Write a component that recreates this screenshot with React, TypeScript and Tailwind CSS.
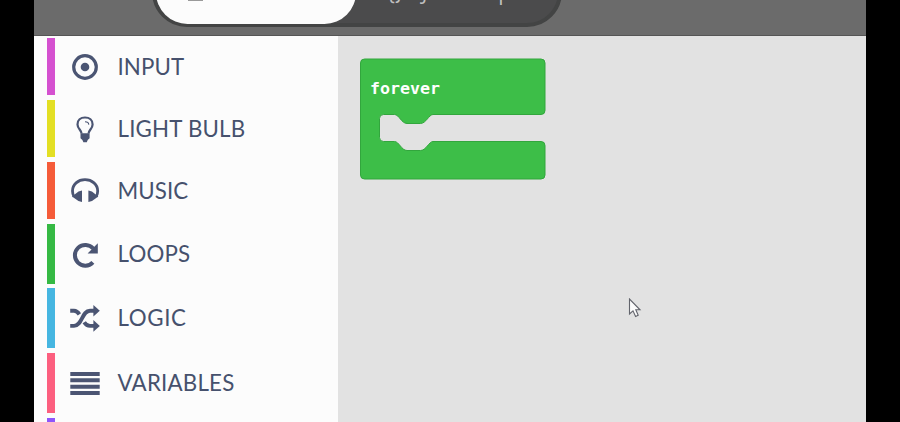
import React from "react";

type Category = {
  label: string;
  bar: string;
  row: string;
  text: string;
  icon: React.ReactNode;
};

const ink = "#4b5573";

const TargetIcon = () => (
  <svg width="32" height="32" viewBox="0 0 32 32" fill="none">
    <circle cx="16" cy="16" r="11.3" stroke={ink} strokeWidth="3.2" />
    <circle cx="16" cy="16" r="4.3" fill={ink} />
  </svg>
);

const BulbIcon = () => (
  <svg width="32" height="32" viewBox="0 0 32 32" fill="none">
    <path
      d="M12.6 20.5C12.4 17 8.5 15.6 8.5 11.4C8.5 7.2 11.6 4.5 16 4.5C20.4 4.5 23.6 7.2 23.6 11.4C23.6 15.6 19.7 17 19.5 20.5"
      stroke={ink}
      strokeWidth="2.2"
    />
    <path d="M16 8.8C18.2 8.8 19.6 9.8 19.8 11.6" stroke={ink} strokeWidth="1.1" />
    <path d="M11.5 20.2H20.6V25.3L18.7 27L17.8 29.3H14.4L13.4 27L11.5 25.3Z" fill={ink} />
  </svg>
);

const HeadphonesIcon = () => (
  <svg width="32" height="32" viewBox="0 0 32 32" fill="none">
    <path
      d="M5 21.5C3.9 19.7 3.5 17.8 3.5 16C3.5 9.3 9 4.7 16 4.7C23 4.7 28.7 9.3 28.7 16C28.7 17.8 28.3 19.7 27.2 21.5"
      stroke={ink}
      strokeWidth="2.8"
    />
    <path d="M13 15.6V27L9.4 26L3 21.4L9.5 16.6Z" fill={ink} />
    <path d="M19.4 15.6V27L23 26L29.3 21.4L22.9 16.6Z" fill={ink} />
  </svg>
);

const RedoIcon = () => (
  <svg width="32" height="32" viewBox="0 0 32 32" fill="none">
    <path d="M24.2 10.5A10.4 10.4 0 1 0 23.9 24.4" stroke={ink} strokeWidth="4" />
    <path d="M28.8 5.2V15.4H18.6Z" fill={ink} />
  </svg>
);

const ShuffleIcon = () => (
  <svg width="32" height="32" viewBox="0 0 32 32" fill="none">
    <path d="M1.2 8.8H5C7.8 8.8 9 10.2 10.4 12.4" stroke={ink} strokeWidth="3.9" />
    <path
      d="M1.2 23.9H5C13.2 23.9 12.8 8.8 21 8.8H25"
      stroke={ink}
      strokeWidth="3.9"
    />
    <path d="M15.2 20.3C16.6 22.5 18.2 23.9 21 23.9H25" stroke={ink} strokeWidth="3.9" />
    <path d="M24.4 3L30.8 8.8L24.4 14.6Z" fill={ink} />
    <path d="M24.4 18.1L30.8 23.9L24.4 29.7Z" fill={ink} />
  </svg>
);

const LinesIcon = () => (
  <svg width="32" height="32" viewBox="0 0 32 32" fill={ink}>
    <path d="M1.3 5H30.7V9H1.3ZM1.3 11.3H30.7V15.2H1.3ZM1.3 17.8H30.7V21.7H1.3ZM1.3 24H30.7V28H1.3Z" />
  </svg>
);

const categories: Category[] = [
  { label: "INPUT", bar: "bg-[#d551d0]", row: "h-[57px] mb-[5px]", text: "tracking-[0.1px]", icon: <TargetIcon /> },
  { label: "LIGHT BULB", bar: "bg-[#e3df24]", row: "h-[57px] mb-[5px]", text: "tracking-[0.2px]", icon: <BulbIcon /> },
  { label: "MUSIC", bar: "bg-[#f55b39]", row: "h-[57px] mb-[5px]", text: "tracking-[0.1px]", icon: <HeadphonesIcon /> },
  { label: "LOOPS", bar: "bg-[#35b944]", row: "h-[60px] mb-[4px]", text: "tracking-[0.2px]", icon: <RedoIcon /> },
  { label: "LOGIC", bar: "bg-[#46b6e1]", row: "h-[60px] mb-[5px]", text: "tracking-[0.6px]", icon: <ShuffleIcon /> },
  { label: "VARIABLES", bar: "bg-[#fc5f7f]", row: "h-[60px] mb-[5px]", text: "tracking-[0.2px]", icon: <LinesIcon /> },
];

const Header = () => (
  <header className="h-9 shrink-0 overflow-hidden border-b border-[#555555] bg-[#6b6b6b] pl-[118px]">
    <div className="-mt-[43px] flex h-[70px] w-[410px] rounded-full border-4 border-[#434444] bg-[#4b4b4c]">
      <div className="flex h-[63px] w-[200px] shrink-0 items-end rounded-full bg-[#fcfcfc] pb-[23px] pl-8">
        <div className="h-[2px] w-[15px] bg-[#9a9a9a]" />
      </div>
      <div className="whitespace-pre pl-[31px] pt-[17px] font-['Open_Sans',sans-serif] text-[21px] font-medium leading-[28px] text-[#c0c0c0]">
        {"{}"}
        <span className="pl-[19px] tracking-[0.2px]">JavaScript</span>
      </div>
    </div>
  </header>
);

const Toolbox = () => (
  <nav className="flex w-[304px] shrink-0 flex-col bg-[#fcfcfc] pl-[13px] pt-[2px]">
    {categories.map((c) => (
      <div key={c.label} className={`flex shrink-0 items-center ${c.row}`}>
        <div className={`w-2 shrink-0 self-stretch ${c.bar}`} />
        <div className="ml-[13.5px] shrink-0">{c.icon}</div>
        <span
          className={`ml-[17px] whitespace-nowrap font-['Lato',sans-serif] text-[22.3px] leading-7 text-[#46516d] ${c.text}`}
        >
          {c.label}
        </span>
      </div>
    ))}
    <div className="h-4 w-2 shrink-0 bg-[#8f55fb]" />
  </nav>
);

const Workspace = () => (
  <main className="min-w-0 flex-1 bg-[#e2e2e2] pl-[22px] pt-[22px]">
    <div className="grid h-[122px] w-[186px]">
      <svg className="col-start-1 row-start-1" width="186" height="122" viewBox="0 0 186 122">
        <path
          d="M4.5 1H181A4 4 0 0 1 185 5V52.5A4 4 0 0 1 181 56.5H73C69 56.5 66 65.5 60.5 65.5H47C41.5 65.5 39 56.5 34.5 56.5H23.5A4 4 0 0 0 19.5 60.5V79.5A4 4 0 0 0 23.5 83.5H34.5C39 83.5 41.5 92.5 47 92.5H60.5C66 92.5 69 83.5 73 83.5H181A4 4 0 0 1 185 87.5V117A4 4 0 0 1 181 121H4.5A4 4 0 0 1 .5 117V5A4 4 0 0 1 4.5 1Z"
          fill="#3dbe48"
          stroke="#32a63d"
          strokeWidth="1"
        />
      </svg>
      <span className="z-10 col-start-1 row-start-1 pl-[10px] pt-[21px] font-['DejaVu_Sans_Mono',monospace] text-[16.6px] font-bold leading-5 text-white">
        forever
      </span>
    </div>
    <svg className="ml-[268px] mt-[118px]" width="14" height="21" viewBox="0 0 14 21">
      <path
        d="M1.5 1V16L5 12.8L7.6 18.4L10.2 17.2L7.8 11.8H12Z"
        fill="#fcfcfc"
        stroke="#62646c"
        strokeWidth="1.1"
      />
    </svg>
  </main>
);

export default function App() {
  return (
    <div className="flex h-[422px] w-[900px] flex-col overflow-hidden bg-black px-[34px]">
      <Header />
      <div className="flex min-h-0 flex-1 overflow-hidden">
        <Toolbox />
        <Workspace />
      </div>
    </div>
  );
}
